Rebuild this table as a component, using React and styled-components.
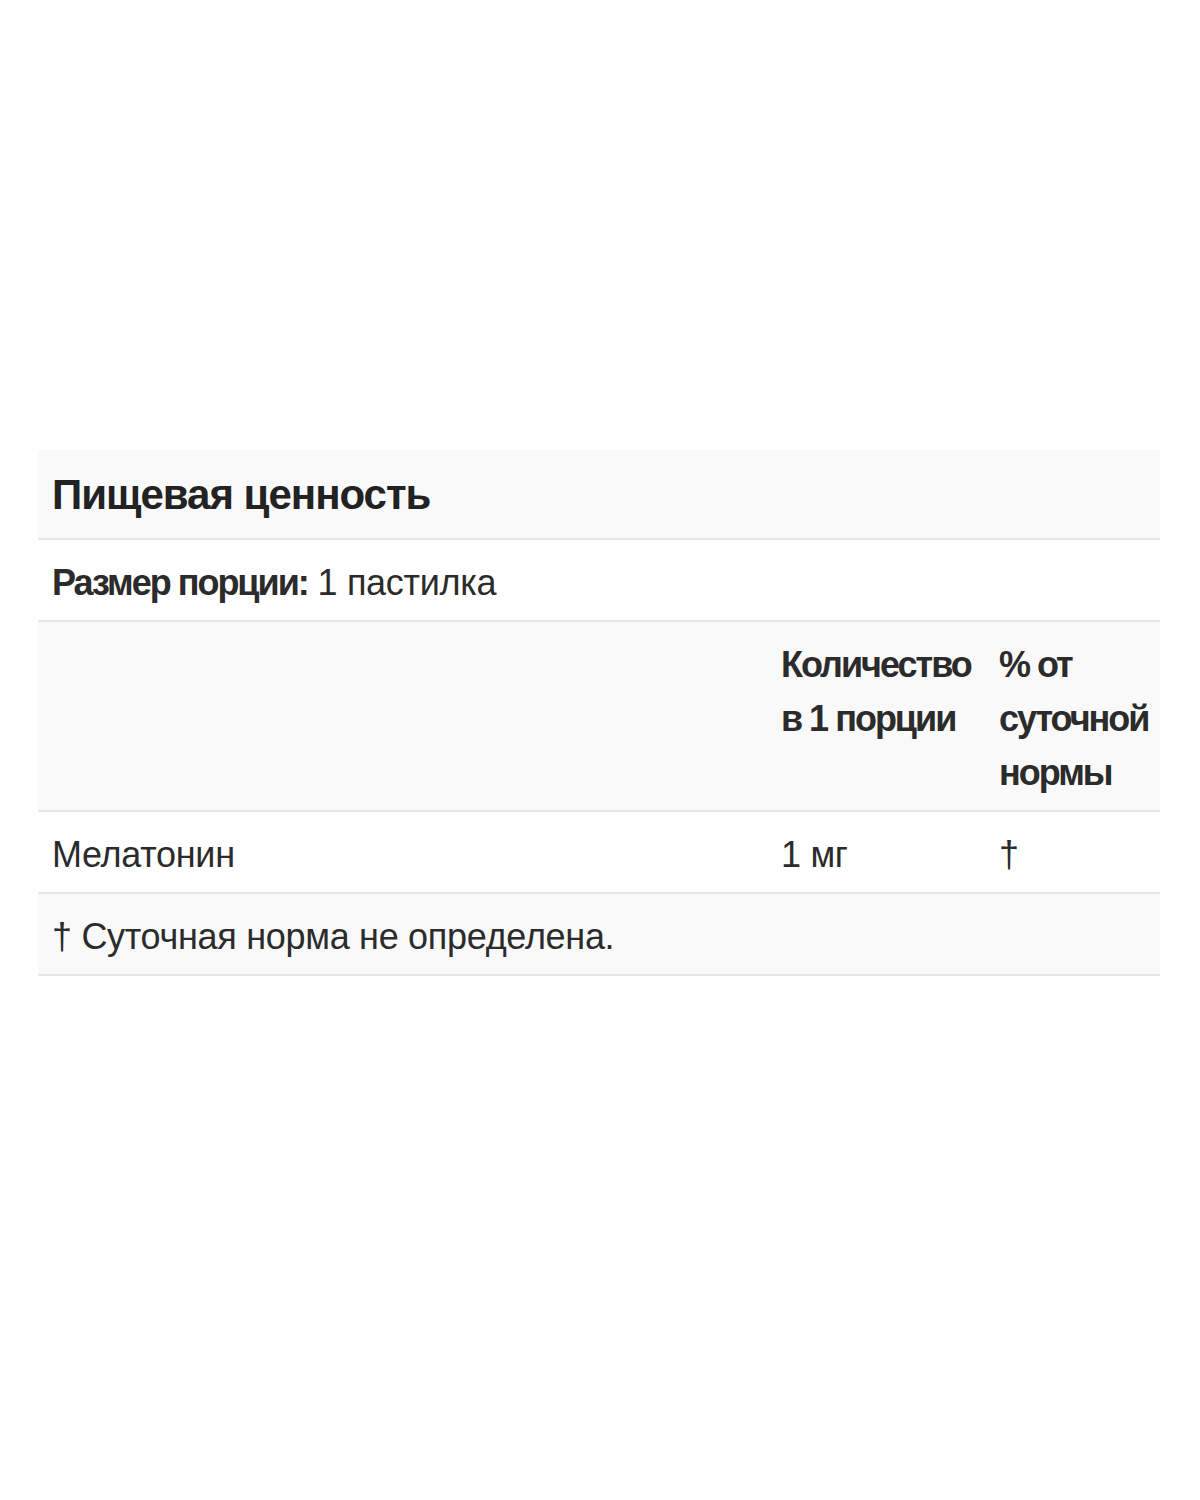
import React from 'react';
import styled, { createGlobalStyle } from 'styled-components';

const GlobalStyle = createGlobalStyle`
  body {
    margin: 0;
    background: #fff;
    font-family: "Liberation Sans", Arial, sans-serif;
    color: #2b2b2b;
  }
`;

const Page = styled.div`
  padding: 450px 40px 0 38px;
`;

const Table = styled.table`
  width: 1122px;
  border-collapse: collapse;
  table-layout: fixed;
`;

const Row = styled.tr`
  background: ${(p) => (p.$shade ? '#f9f9f9' : '#fff')};
  border-bottom: 2px solid #e6e6e6;
`;

const Cell = styled.td`
  padding: 16px 12px 10px 14px;
  font-size: 36px;
  line-height: 54px;
  vertical-align: top;
  font-weight: ${(p) => (p.$bold ? 700 : 400)};
  letter-spacing: ${(p) => (p.$bold ? '-2px' : '-0.3px')};
`;

const TitleCell = styled.td`
  padding: 13px 14px 12px;
  font-size: 42px;
  line-height: 63px;
  font-weight: 700;
  letter-spacing: -1px;
  color: #222;
`;

const Strong = styled.span`
  font-weight: 700;
  letter-spacing: -2px;
`;

export default function App() {
  return (
    <Page>
      <GlobalStyle />
      <Table>
        <colgroup>
          <col />
          <col style={{ width: 218 }} />
          <col style={{ width: 175 }} />
        </colgroup>
        <tbody>
          <Row $shade>
            <TitleCell colSpan={3}>Пищевая ценность</TitleCell>
          </Row>
          <Row>
            <Cell colSpan={3}>
              <Strong>Размер порции:</Strong> 1 пастилка
            </Cell>
          </Row>
          <Row $shade>
            <Cell />
            <Cell $bold>Количество в 1 порции</Cell>
            <Cell $bold>% от суточной нормы</Cell>
          </Row>
          <Row>
            <Cell>Мелатонин</Cell>
            <Cell>1 мг</Cell>
            <Cell>†</Cell>
          </Row>
          <Row $shade>
            <Cell colSpan={3}>† Суточная норма не определена.</Cell>
          </Row>
        </tbody>
      </Table>
    </Page>
  );
}
